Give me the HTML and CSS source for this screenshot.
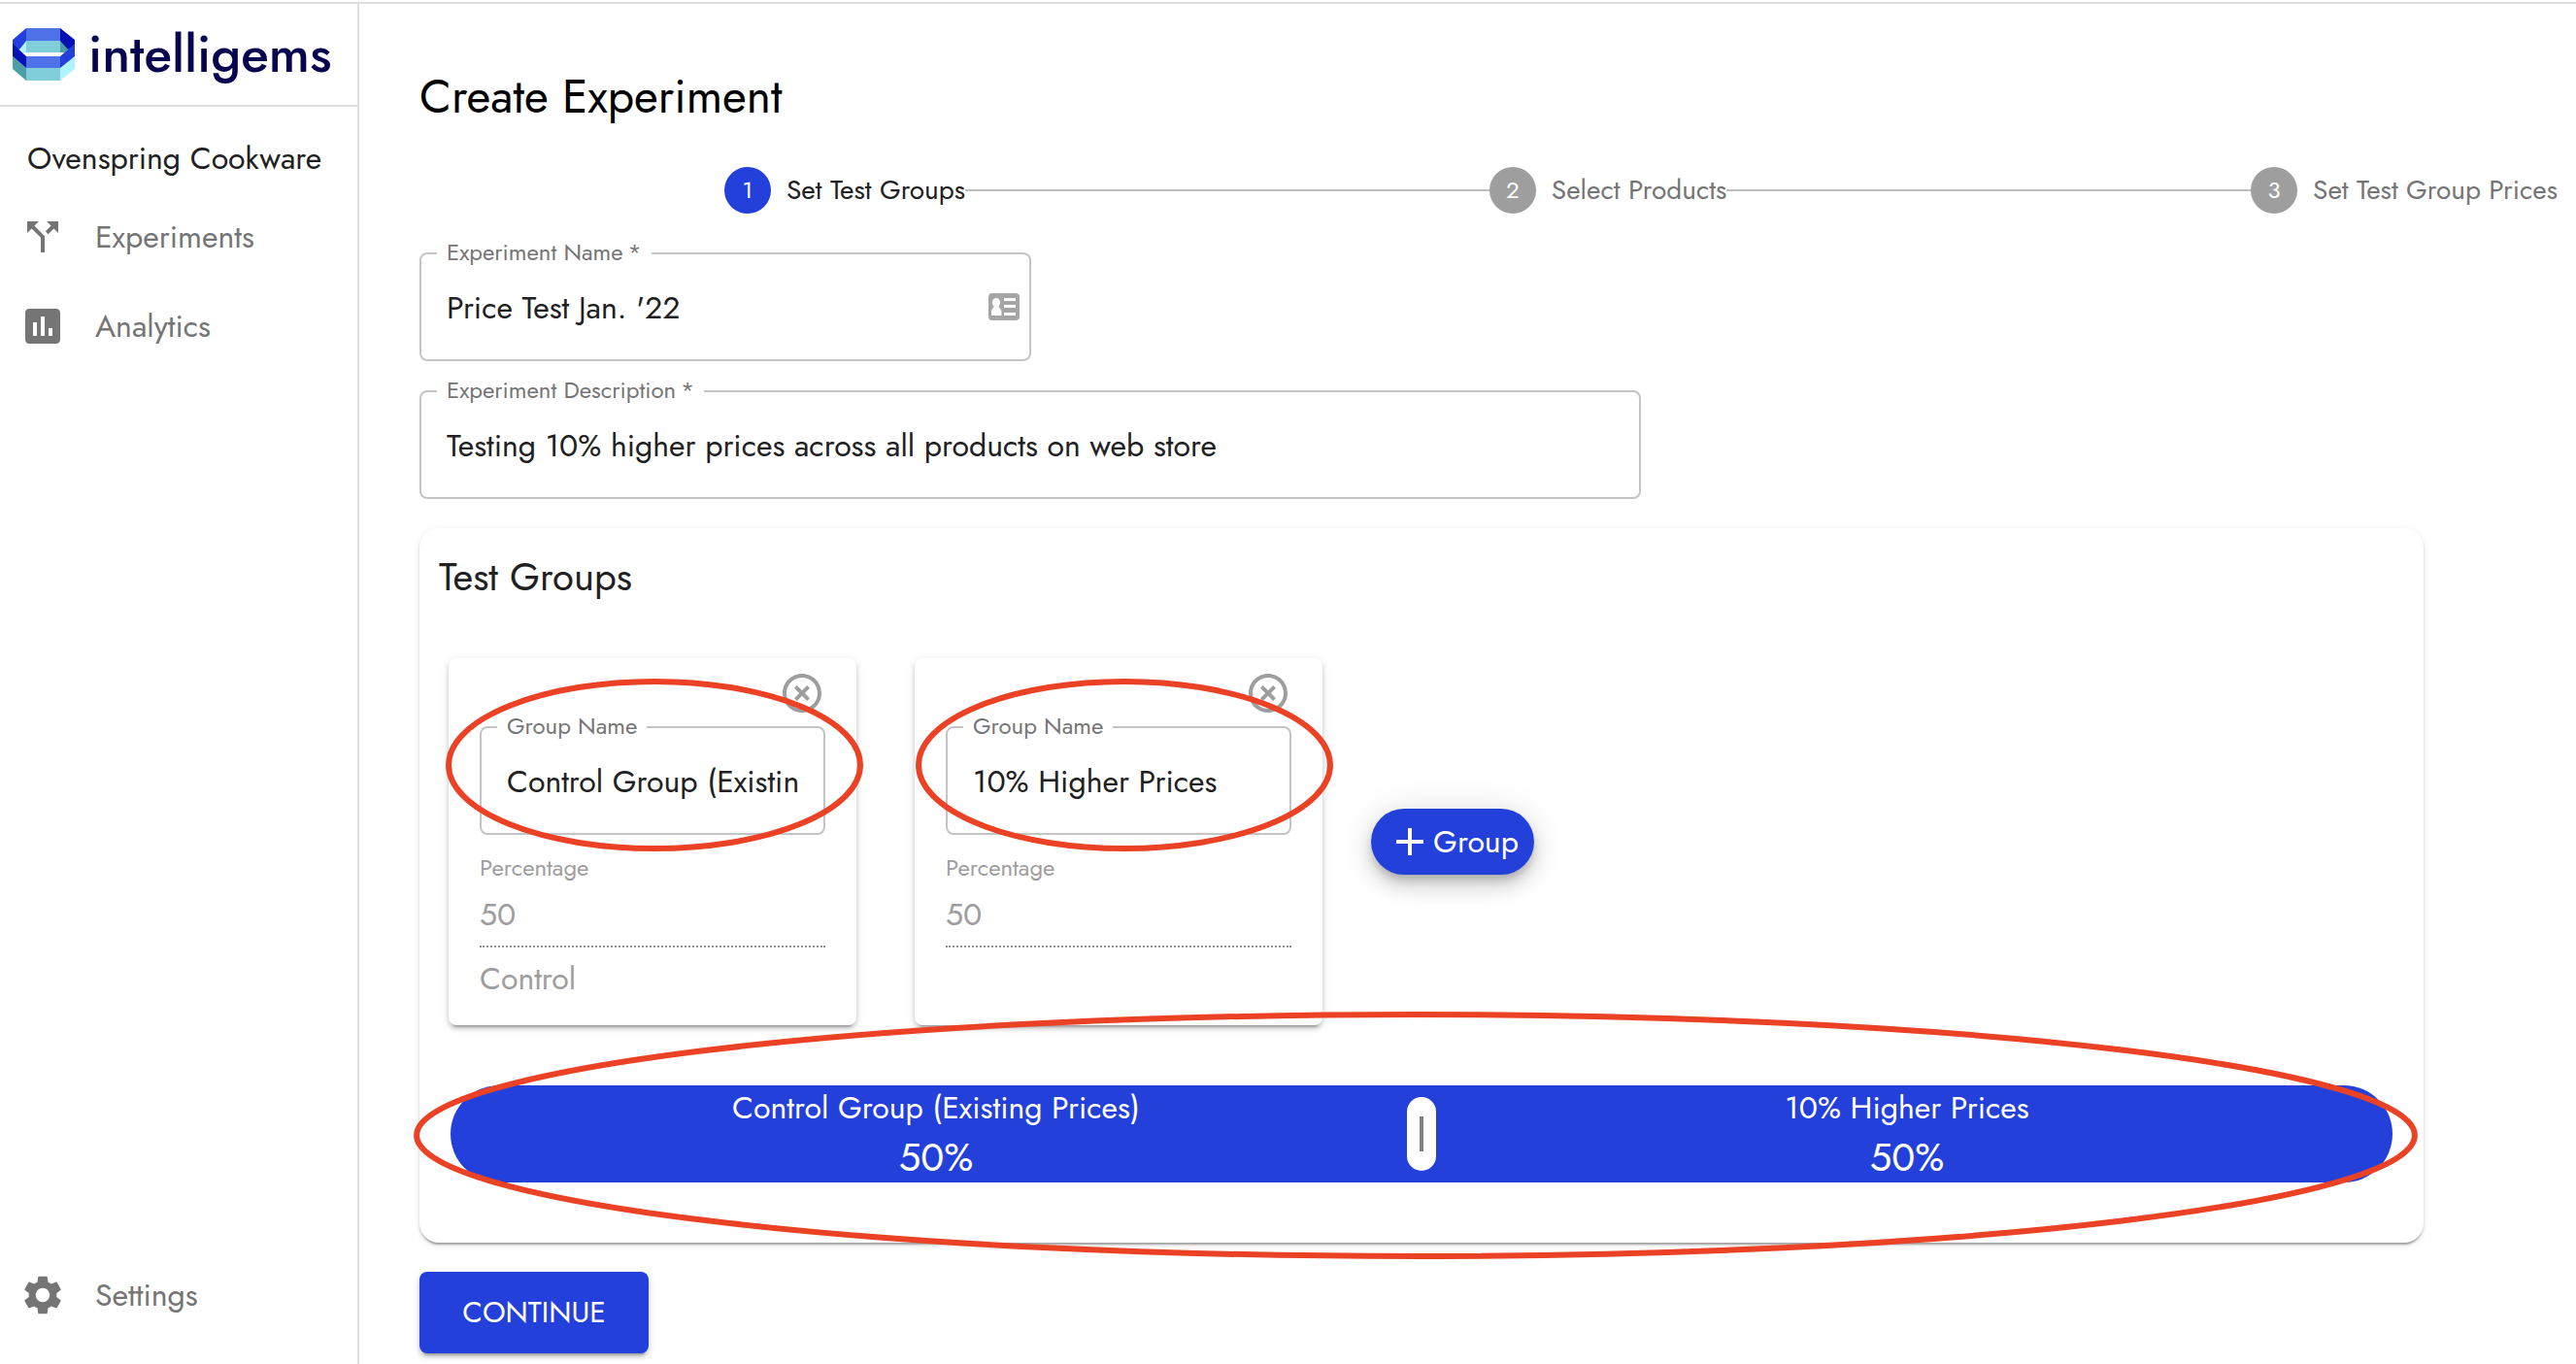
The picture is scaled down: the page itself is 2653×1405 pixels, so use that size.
FILE: index.html
```html
<!DOCTYPE html>
<html lang="en">
<head>
<meta charset="utf-8">
<meta name="viewport" content="width=device-width, initial-scale=1">
<title>Create Experiment</title>
<link rel="stylesheet" href="styles.css">
</head>
<body>
<div class="app">
  <aside class="sidebar">
    <a class="brand" href="#">
      <svg class="brand-mark" viewBox="0 0 64 54" aria-hidden="true">
        <path fill="#4b9fa9" d="M0 29 14 41V54L0 42z"/>
        <path fill="#80ced9" d="M14 41h35v13H14z"/>
        <path fill="#aef3fd" d="M64 29 49 41v13l15-12z"/>
        <path fill="#80ced9" d="M14 12h35v13H14z"/>
        <path fill="#aef3fd" d="M14 12v13h-4L6 21z"/>
        <path fill="#4b9fa9" d="M49 12v13h5l4-4z"/>
        <path fill="#4f72e8" d="M14 0h35v13H14z"/>
        <path fill="#2440da" d="M14 0v13L7 22 0 19V12z"/>
        <path fill="#0511b5" d="M49 0v13l8 9 7-3V12z"/>
        <path fill="#0511b5" d="M0 16v13l14 12V29z"/>
        <path fill="#4f72e8" d="M14 29h35v12H14z"/>
        <path fill="#2440da" d="M64 16 49 29v12l15-12z"/>
      </svg>
      <span class="brand-name">intelligems</span>
    </a>
    <p class="store">Ovenspring Cookware</p>
    <nav class="nav">
      <a class="nav-item" href="#">
        <svg class="icon" viewBox="0 0 24 24" aria-hidden="true"><path d="M14 4l2.29 2.29-2.88 2.88 1.42 1.42 2.88-2.88L20 10V4zM10 4H4v6l2.29-2.29 4.71 4.7V20h2v-8.41l-5.29-5.3z"/></svg>
        Experiments
      </a>
      <a class="nav-item" href="#">
        <svg class="icon" viewBox="0 0 24 24" aria-hidden="true"><path d="M19 3H5c-1.1 0-2 .9-2 2v14c0 1.1.9 2 2 2h14c1.1 0 2-.9 2-2V5c0-1.1-.9-2-2-2zM9 17H7v-7h2v7zm4 0h-2V7h2v10zm4 0h-2v-4h2v4z"/></svg>
        Analytics
      </a>
      <a class="nav-item nav-settings" href="#">
        <svg class="icon" viewBox="0 0 24 24" aria-hidden="true"><path d="M19.14 12.94c.04-.3.06-.61.06-.94 0-.32-.02-.64-.07-.94l2.03-1.58c.18-.14.23-.41.12-.61l-1.92-3.32c-.12-.22-.37-.29-.59-.22l-2.39.96c-.5-.38-1.03-.7-1.62-.94l-.36-2.54c-.04-.24-.24-.41-.48-.41h-3.84c-.24 0-.43.17-.47.41l-.36 2.54c-.59.24-1.13.57-1.62.94l-2.39-.96c-.22-.08-.47 0-.59.22L2.74 8.87c-.12.21-.08.47.12.61l2.03 1.58c-.05.3-.09.63-.09.94s.02.64.07.94l-2.03 1.58c-.18.14-.23.41-.12.61l1.92 3.32c.12.22.37.29.59.22l2.39-.96c.5.38 1.03.7 1.62.94l.36 2.54c.05.24.24.41.48.41h3.84c.24 0 .44-.17.47-.41l.36-2.54c.59-.24 1.13-.56 1.62-.94l2.39.96c.22.08.47 0 .59-.22l1.92-3.32c.12-.22.07-.47-.12-.61l-2.01-1.58zM12 15.6c-1.98 0-3.6-1.62-3.6-3.6s1.62-3.6 3.6-3.6 3.6 1.62 3.6 3.6-1.62 3.6-3.6 3.6z"/></svg>
        Settings
      </a>
    </nav>
  </aside>

  <main class="main">
    <h1 class="title">Create Experiment</h1>

    <ol class="stepper">
      <li class="step step-active"><span class="step-num">1</span>Set Test Groups</li>
      <li class="step-line" aria-hidden="true"></li>
      <li class="step"><span class="step-num">2</span>Select Products</li>
      <li class="step-line" aria-hidden="true"></li>
      <li class="step"><span class="step-num">3</span>Set Test Group Prices</li>
    </ol>

    <form class="form">
      <div class="field field-name">
        <label class="field-label" for="exp-name">Experiment Name&thinsp;*</label>
        <input class="field-input" id="exp-name" type="text" value="Price Test Jan. '22">
        <svg class="contact-icon" viewBox="0 0 32 28" aria-hidden="true">
          <rect width="32" height="28" rx="4" fill="#a6a6a6"/>
          <path fill="#fff" d="M8 5c2.500 0 4 2 4 4.500 0 1.800-.7 3-1.500 4 0 2 3 2.500 3 5.500v4H3v-4c0-3 2.500-3.500 2.500-5.500-.8-1-1.500-2.200-1.500-4C4 7 5.500 5 8 5zM16 5h12v3H16zM16 12h12v3H16zM16 20h12v3H16z"/>
        </svg>
      </div>

      <div class="field field-desc">
        <label class="field-label" for="exp-desc">Experiment Description&thinsp;*</label>
        <input class="field-input" id="exp-desc" type="text" value="Testing 10% higher prices across all products on web store">
      </div>

      <section class="panel">
        <h2 class="panel-title">Test Groups</h2>

        <div class="groups">
          <article class="card">
            <button class="card-close" type="button" aria-label="Remove group">
              <svg class="icon" viewBox="0 0 24 24" aria-hidden="true"><path d="M14.590 8 12 10.590 9.410 8 8 9.410 10.590 12 8 14.590 9.410 16 12 13.410 14.590 16 16 14.590 13.410 12 16 9.410zM12 2C6.470 2 2 6.470 2 12s4.470 10 10 10 10-4.470 10-10S17.530 2 12 2zm0 18c-4.410 0-8-3.590-8-8s3.590-8 8-8 8 3.590 8 8-3.590 8-8 8z"/></svg>
            </button>
            <div class="field">
              <label class="field-label" for="group-a">Group Name</label>
              <input class="field-input" id="group-a" type="text" value="Control Group (Existing Prices)">
            </div>
            <label class="percent-label" for="percent-a">Percentage</label>
            <input class="percent-input" id="percent-a" type="text" value="50" disabled>
            <p class="card-note">Control</p>
            <svg class="mark mark-card" aria-hidden="true"><ellipse cx="50%" cy="50%" rx="49.300%" ry="48.300%"/></svg>
          </article>

          <article class="card">
            <button class="card-close" type="button" aria-label="Remove group">
              <svg class="icon" viewBox="0 0 24 24" aria-hidden="true"><path d="M14.590 8 12 10.590 9.410 8 8 9.410 10.590 12 8 14.590 9.410 16 12 13.410 14.590 16 16 14.590 13.410 12 16 9.410zM12 2C6.470 2 2 6.470 2 12s4.470 10 10 10 10-4.470 10-10S17.530 2 12 2zm0 18c-4.410 0-8-3.590-8-8s3.590-8 8-8 8 3.590 8 8-3.590 8-8 8z"/></svg>
            </button>
            <div class="field">
              <label class="field-label" for="group-b">Group Name</label>
              <input class="field-input" id="group-b" type="text" value="10% Higher Prices">
            </div>
            <label class="percent-label" for="percent-b">Percentage</label>
            <input class="percent-input" id="percent-b" type="text" value="50" disabled>
            <svg class="mark mark-card mark-card-b" aria-hidden="true"><ellipse cx="50%" cy="50%" rx="49.300%" ry="48.300%"/></svg>
          </article>

          <button class="add-group" type="button">
            <svg class="plus" viewBox="0 0 28 28" aria-hidden="true"><path d="M12 0h4v12h12v4H16v12h-4V16H0v-4h12z"/></svg>
            Group
          </button>
        </div>

        <div class="split">
          <div class="split-part" style="width: 50%">
            <span class="split-name">Control Group (Existing Prices)</span>
            <span class="split-value">50%</span>
          </div>
          <div class="split-part" style="width: 50%">
            <span class="split-name">10% Higher Prices</span>
            <span class="split-value">50%</span>
          </div>
          <button class="split-handle" type="button" style="left: 50%" aria-label="Adjust split"><span class="split-grip"></span></button>
          <svg class="mark mark-split" aria-hidden="true"><ellipse cx="50%" cy="50%" rx="49.850%" ry="48.800%"/></svg>
        </div>
      </section>

      <button class="continue" type="button">CONTINUE</button>
    </form>
  </main>
</div>
</body>
</html>
```

FILE: styles.css
```css
*,
*::before,
*::after {
  box-sizing: border-box;
}

body {
  margin: 0;
  padding-top: 2px;
  background: #fff;
  color: #212121;
  font-family: Jost, Lato, sans-serif;
  font-size: 32px;
  line-height: 40px;
}

h1,
h2,
p,
ol {
  margin: 0;
  padding: 0;
  font-weight: 400;
}

a {
  color: inherit;
  text-decoration: none;
}

button,
input {
  margin: 0;
  padding: 0;
  border: 0;
  background: none;
  color: inherit;
  font: inherit;
}

.app {
  display: flex;
  min-height: calc(100vh - 2px);
  border-top: 2px solid #dedede;
}

/* Sidebar */

.sidebar {
  display: flex;
  flex: 0 0 370px;
  flex-direction: column;
  border-right: 2px solid #e0e0e0;
}

.brand {
  display: flex;
  align-items: center;
  gap: 14px;
  height: 106px;
  padding-left: 13px;
  border-bottom: 2px solid #e0e0e0;
}

.brand-mark {
  width: 64px;
  height: 54px;
}

.brand-name {
  color: #06044f;
  font-size: 53px;
  font-weight: 500;
  line-height: 60px;
}

.store {
  padding: 33px 0 15px 28px;
}

.nav {
  display: flex;
  flex: 1;
  flex-direction: column;
  padding-bottom: 25px;
  color: #757575;
}

.nav-item {
  display: flex;
  align-items: center;
  gap: 30px;
  height: 92px;
  padding-left: 20px;
}

.nav-settings {
  margin-top: auto;
}

.icon {
  display: block;
  width: 48px;
  height: 48px;
  fill: currentColor;
}

/* Main column */

.main {
  flex: 1;
  min-width: 0;
  padding: 66px 19px 11px 62px;
}

.title {
  color: #000;
  font-size: 48px;
  line-height: 60px;
}

.stepper {
  display: flex;
  align-items: center;
  margin: 42px 0 40px;
  padding-left: 314px;
  list-style: none;
  color: #757575;
  font-size: 28px;
}

.step {
  display: flex;
  align-items: center;
  gap: 16px;
  height: 48px;
  white-space: nowrap;
}

.step-active {
  color: #212121;
}

.step-num {
  width: 48px;
  border-radius: 50%;
  background: #9e9e9e;
  color: #fff;
  font-size: 24px;
  line-height: 48px;
  text-align: center;
}

.step-active .step-num {
  background: #2440da;
}

.step-line {
  flex: 1;
  height: 2px;
  background: #bdbdbd;
}

.form {
  display: flex;
  flex-direction: column;
  gap: 30px;
  max-width: 2064px;
}

/* Outlined text field */

.field {
  position: relative;
  display: flex;
  align-items: center;
  height: 112px;
  padding: 0 26px;
  border: 2px solid #c4c4c4;
  border-radius: 8px;
}

.field-name {
  width: 100%;
  max-width: 630px;
  padding-right: 10px;
}

.field-desc {
  width: 100%;
  max-width: 1258px;
}

.field-label {
  position: absolute;
  top: -16px;
  left: 16px;
  padding: 0 10px;
  background: #fff;
  color: #757575;
  font-size: 24px;
  line-height: 28px;
}

.field-input {
  flex: 1;
  min-width: 0;
  height: 50px;
  padding-top: 2px;
  outline: 0;
}

.contact-icon {
  width: 32px;
  height: 28px;
}

/* Test groups */

.panel {
  padding: 26px 20px 62px;
  border-radius: 20px;
  box-shadow: 0 4px 2px -2px rgba(0, 0, 0, 0.2), 0 2px 2px rgba(0, 0, 0, 0.14), 0 2px 6px rgba(0, 0, 0, 0.12);
}

.panel-title {
  font-size: 40px;
  line-height: 48px;
}

.groups {
  display: flex;
  gap: 60px;
  padding: 60px 10px 62px;
}

.card {
  position: relative;
  display: flex;
  flex-direction: column;
  width: 420px;
  padding: 12px 32px 28px;
  border-radius: 8px;
  box-shadow: 0 6px 2px -4px rgba(0, 0, 0, 0.2), 0 4px 4px rgba(0, 0, 0, 0.14), 0 2px 10px rgba(0, 0, 0, 0.12);
}

.card-close {
  align-self: flex-end;
  margin-bottom: 10px;
  color: #9e9e9e;
}

.percent-label {
  margin-top: 20px;
  color: #9e9e9e;
  font-size: 24px;
  line-height: 28px;
}

.percent-input {
  width: 100%;
  height: 68px;
  padding-top: 2px;
  border-bottom: 2px dotted #949494;
  color: #9e9e9e;
}

.card-note {
  margin-top: 12px;
  color: #9e9e9e;
}

.add-group {
  display: flex;
  align-items: center;
  align-self: center;
  justify-content: center;
  gap: 10px;
  width: 168px;
  height: 68px;
  margin-left: -10px;
  padding-left: 10px;
  border-radius: 34px;
  background: #2440da;
  box-shadow: 0 6px 10px -2px rgba(0, 0, 0, 0.2), 0 12px 20px rgba(0, 0, 0, 0.14), 0 2px 36px rgba(0, 0, 0, 0.12);
  color: #fff;
}

.plus {
  width: 28px;
  height: 28px;
  fill: currentColor;
}

/* Traffic split bar */

.split {
  position: relative;
  display: flex;
  height: 100px;
  margin: 0 12px;
  border-radius: 50px;
  background: #2440da;
  color: #fff;
}

.split-part {
  display: flex;
  flex-direction: column;
  align-items: center;
}

.split-name {
  line-height: 46px;
}

.split-value {
  font-size: 40px;
  line-height: 56px;
}

.split-handle {
  position: absolute;
  top: 12px;
  display: flex;
  align-items: center;
  justify-content: center;
  width: 30px;
  height: 76px;
  margin-left: -15px;
  border-radius: 15px;
  background: #fff;
}

.split-grip {
  width: 4px;
  height: 36px;
  background: #808080;
}

/* Ellipse highlights drawn over the controls */

.mark {
  position: absolute;
  z-index: 1;
  overflow: visible;
  pointer-events: none;
  fill: none;
  stroke: #eb4226;
  stroke-width: 6px;
}

.mark-card {
  top: 21px;
  left: -3px;
  width: 430px;
  height: 178px;
}

.mark-card-b {
  left: 1px;
}

.mark-split {
  top: -76px;
  left: -38px;
  width: calc(100% + 64px);
  height: 255px;
}

.continue {
  align-self: flex-start;
  width: 236px;
  height: 84px;
  border-radius: 8px;
  background: #2440da;
  box-shadow: 0 6px 2px -4px rgba(0, 0, 0, 0.2), 0 4px 4px rgba(0, 0, 0, 0.14), 0 2px 10px rgba(0, 0, 0, 0.12);
  color: #fff;
  font-size: 30px;
}
```
